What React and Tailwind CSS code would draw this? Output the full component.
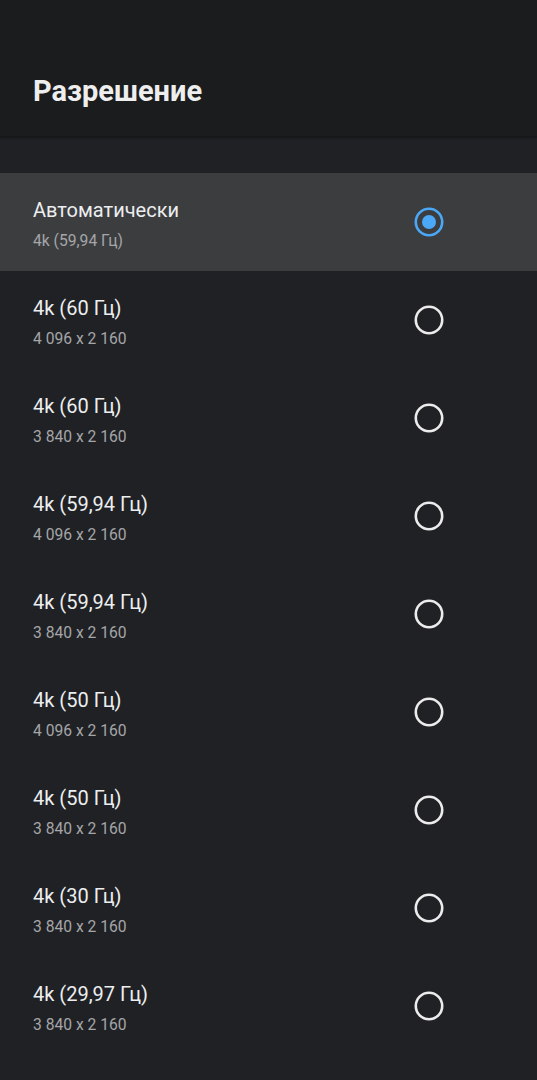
import React from "react";

const items = [
  { t: "Автоматически", s: "4k (59,94 Гц)", sel: true },
  { t: "4k (60 Гц)", s: "4 096 x 2 160" },
  { t: "4k (60 Гц)", s: "3 840 x 2 160" },
  { t: "4k (59,94 Гц)", s: "4 096 x 2 160" },
  { t: "4k (59,94 Гц)", s: "3 840 x 2 160" },
  { t: "4k (50 Гц)", s: "4 096 x 2 160" },
  { t: "4k (50 Гц)", s: "3 840 x 2 160" },
  { t: "4k (30 Гц)", s: "3 840 x 2 160" },
  { t: "4k (29,97 Гц)", s: "3 840 x 2 160" },
];

function Radio({ on }) {
  return (
    <svg width="32" height="32" viewBox="0 0 32 32">
      {on ? (
        <>
          <circle cx="16" cy="16" r="13.2" fill="none" stroke="#4aa8f7" strokeWidth="2.6" />
          <circle cx="16" cy="16" r="7" fill="#4aa8f7" />
        </>
      ) : (
        <circle cx="16" cy="16" r="13.2" fill="none" stroke="#ececec" strokeWidth="2.6" />
      )}
    </svg>
  );
}

export default function App() {
  return (
    <div
      className="w-[537px] h-[1080px] bg-[#202124] overflow-hidden"
      style={{ fontFamily: "Roboto, 'Noto Sans', sans-serif" }}
    >
      <div className="h-[137px] bg-[#1b1c1e] border-b border-[#161719] shadow-[0_1px_2px_rgba(0,0,0,0.35)] flex items-end pb-[28px] px-[33px]">
        <h1 className="text-[29px] font-bold text-[#eeeeee] leading-[34px]">Разрешение</h1>
      </div>
      <div className="pt-[36px]">
        {items.map((it, i) => (
          <div
            key={i}
            className={`h-[98px] flex items-center justify-between pl-[33px] pr-[92px] ${it.sel ? "bg-[#3c3d3f]" : ""}`}
          >
            <div className="flex flex-col pt-[3px]">
              <span className="text-[20px] leading-[24px] text-[#eceef0]">{it.t}</span>
              <span className="mt-[8px] text-[17px] leading-[20px] text-[#a4a6a9] inline-block origin-left scale-x-[0.92] whitespace-nowrap">
                {it.s}
              </span>
            </div>
            <Radio on={it.sel} />
          </div>
        ))}
      </div>
    </div>
  );
}
